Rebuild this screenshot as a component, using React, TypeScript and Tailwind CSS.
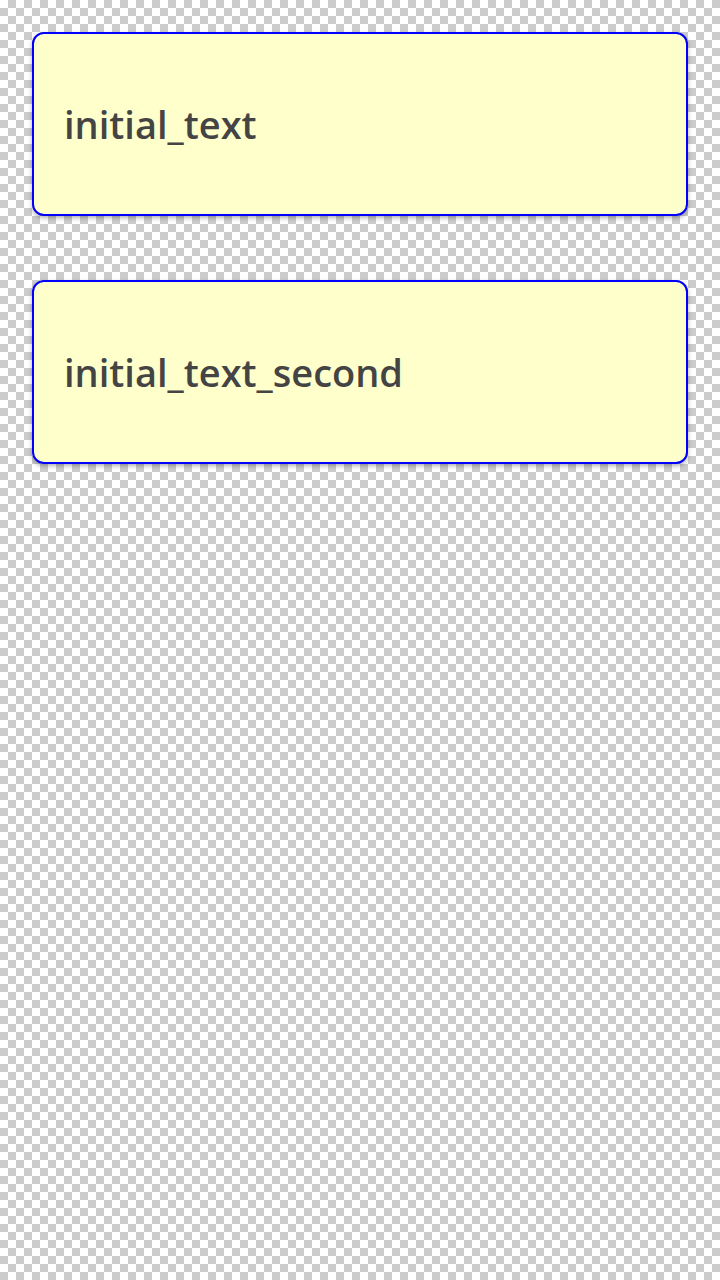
const cards = ['initial_text', 'initial_text_second']

const App = () => {
	return (
		<div className="min-h-screen bg-[conic-gradient(#cccccc_25%,#ffffff_0_50%,#cccccc_0_75%,#ffffff_0)] bg-size-[16px_16px] p-8">
			<div className="flex flex-col gap-16">
				{cards.map(text => (
					<div
						key={text}
						className="flex h-[184px] items-center rounded-xl border-2 border-[#0000ff] bg-[#ffffcc] px-[30px] shadow-[0_2px_4px_rgba(0,0,0,0.3)]"
					>
						<span className="font-['Open_Sans',sans-serif] text-[38px] font-semibold text-[#444444]">{text}</span>
					</div>
				))}
			</div>
		</div>
	)
}

export default App
